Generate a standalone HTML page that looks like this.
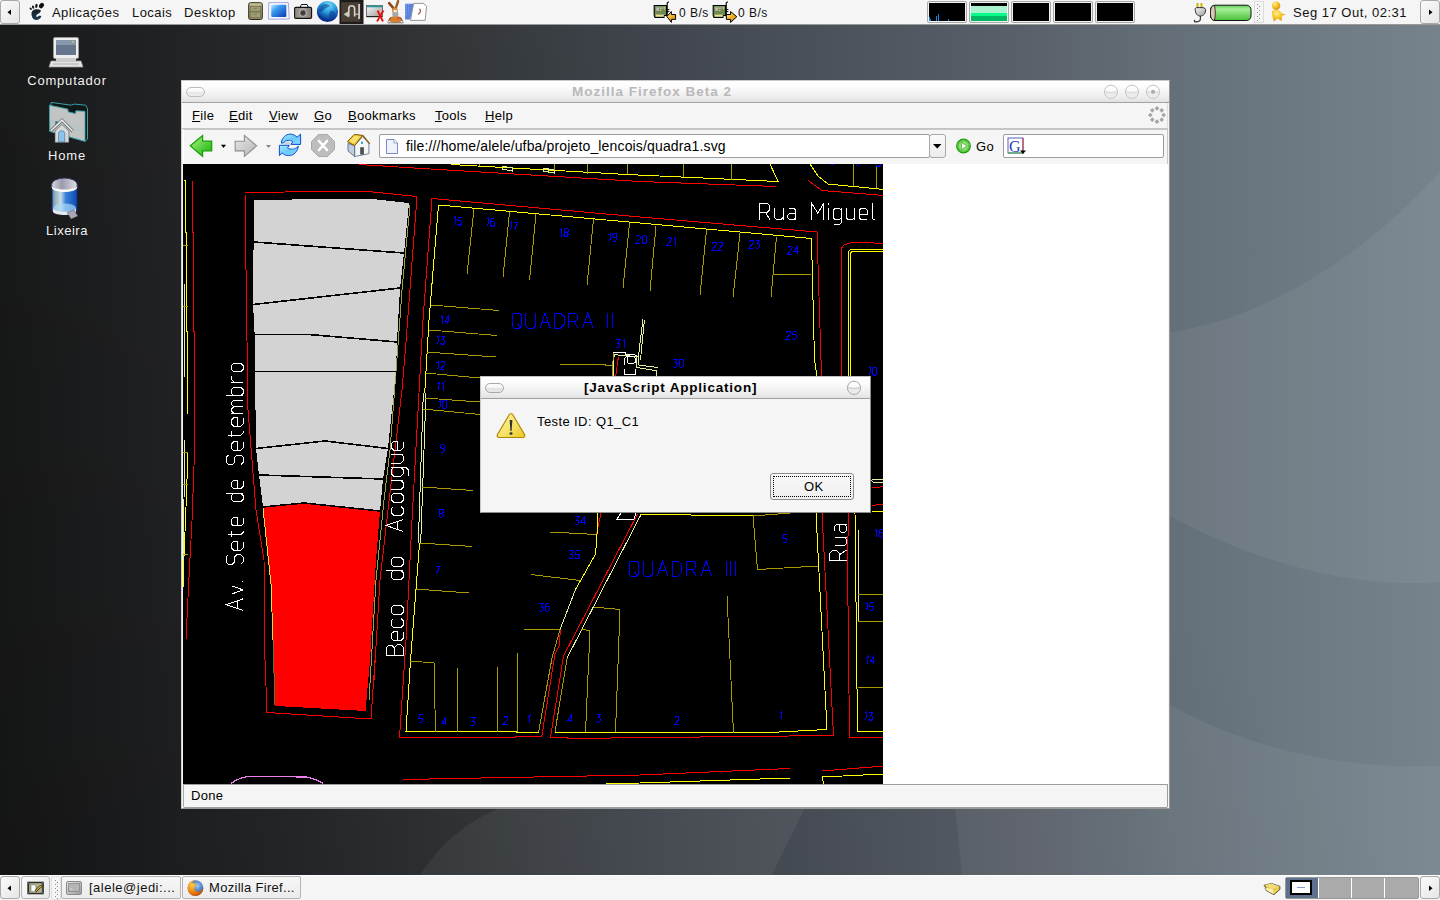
<!DOCTYPE html>
<html><head><meta charset="utf-8">
<style>
*{box-sizing:border-box}
html,body{margin:0;padding:0}
body{width:1440px;height:900px;position:relative;overflow:hidden;font-family:"Liberation Sans",sans-serif;font-size:13px;color:#000;background:#2a2d30}
.abs{position:absolute}
#desk{left:0;top:0;width:1440px;height:900px;background:linear-gradient(90deg,#1a1b1b 0px,#222325 150px,#2a2d30 300px,#363a3d 480px,#40454d 640px,#4a5058 800px,#5a6069 1020px,#66727b 1200px,#76838d 1440px)}
#top{left:0;top:0;width:1440px;height:25px;background:#f5f5f5;border-bottom:1px solid #9a9a9a}
#bot{left:0;top:875px;width:1440px;height:25px;background:#f5f5f5;border-top:1px solid #fff}
.ptxt{position:absolute;white-space:pre;color:#111}
.dicon{position:absolute;color:#f4f4f4;text-align:center;white-space:pre;text-shadow:0 0 1px rgba(0,0,0,0.6)}
#ff{left:181px;top:80px;width:989px;height:729px;background:#f5f5f5;border:1px solid #7a7a7a}
.menu{position:absolute;top:108px;white-space:pre;letter-spacing:0.3px}
.menu u{text-decoration:underline;text-underline-offset:0.5px;text-decoration-thickness:1px}
</style></head><body>
<div id="desk" class="abs">
<svg width="1440" height="900" style="position:absolute;left:0;top:0">
  <defs><linearGradient id="dkg" x1="0" y1="900" x2="900" y2="200" gradientUnits="userSpaceOnUse"><stop offset="0" stop-color="#000" stop-opacity="0.26"/><stop offset="0.45" stop-color="#000" stop-opacity="0.08"/><stop offset="1" stop-color="#000" stop-opacity="0"/></linearGradient></defs>
  <rect x="0" y="0" width="1440" height="900" fill="url(#dkg)"/>
  <path d="M420,875 C440,845 465,822 500,808 L700,700 L1000,420 C1080,380 1110,345 1170,332 C1260,320 1360,260 1440,172 L1440,582 C1350,590 1250,560 1170,516 L1000,560 L820,790 L805,808 L772,875 Z" fill="#ffffff" fill-opacity="0.055"/>
  <path d="M962,875 L955,808 L1000,780 L1170,705 C1250,750 1350,770 1440,766 L1440,875 Z" fill="#ffffff" fill-opacity="0.055"/>
</svg>
</div>

<!-- TOP PANEL -->
<div id="top" class="abs">
  <div class="abs" style="left:0;top:0;width:20px;height:24px;border:1px solid #a8a8a8;border-radius:3px;background:linear-gradient(135deg,#fafafa,#e6e6e6)"></div>
  <svg class="abs" style="left:0;top:0" width="20" height="24"><path d="M11,9.5 L11,15 L7.5,12.2 Z" fill="#000"/></svg>
  <svg class="abs" style="left:26px;top:0px" width="24" height="24">
    <defs><linearGradient id="ftg" x1="0" y1="0" x2="0" y2="1"><stop offset="0" stop-color="#1a1e22"/><stop offset="1" stop-color="#1a3a50"/></linearGradient></defs>
    <ellipse cx="15.5" cy="5.6" rx="2.2" ry="2.9" fill="#111" transform="rotate(35 15.5 5.6)"/>
    <ellipse cx="10.4" cy="5.9" rx="1.2" ry="2.1" fill="#111" transform="rotate(10 10.4 5.9)"/>
    <ellipse cx="7.1" cy="7.1" rx="1" ry="1.7" fill="#111" transform="rotate(-20 7.1 7.1)"/>
    <ellipse cx="4.7" cy="8.7" rx="0.9" ry="1.4" fill="#111" transform="rotate(-40 4.7 8.7)"/>
    <path d="M5.5,13.5 C5.5,10.8 8,9.3 11,9.3 C13.5,9.3 15,10 14.8,11.2 C14.5,12.8 12,13.5 10.5,15 C10,15.8 10.2,17 11,17 C11.8,17 12.3,16 13,15.8 C14.3,15.5 15.5,15.8 15.3,16.5 C14.8,18.5 12.5,19.9 10,19.9 C7,19.9 5.5,16.8 5.5,13.5 Z" fill="url(#ftg)"/>
  </svg>
  <div class="ptxt" style="left:52px;top:5px;letter-spacing:0.45px">Aplicações</div>
  <div class="ptxt" style="left:132px;top:5px;letter-spacing:0.45px">Locais</div>
  <div class="ptxt" style="left:184px;top:5px;letter-spacing:0.6px">Desktop</div>
  <!-- launchers -->
  <svg class="abs" style="left:246px;top:0" width="184" height="24">
    <!-- filing cabinet -->
    <defs>
      <linearGradient id="fcg" x1="0" y1="0" x2="0" y2="1"><stop offset="0" stop-color="#d8d6a8"/><stop offset="0.2" stop-color="#a8a67a"/><stop offset="1" stop-color="#8a8860"/></linearGradient>
      <linearGradient id="scg" x1="0" y1="0" x2="1" y2="1"><stop offset="0" stop-color="#b8f0ff"/><stop offset="0.35" stop-color="#3a9af0"/><stop offset="1" stop-color="#0a3ab0"/></linearGradient>
    </defs>
    <rect x="2.7" y="2.7" width="13.6" height="16.8" rx="1.8" fill="url(#fcg)" stroke="#2a2a1a" stroke-width="1"/>
    <rect x="4.2" y="6.4" width="10.5" height="4.8" fill="#a09e72" stroke="#6a6848" stroke-width="0.6"/>
    <rect x="4.2" y="12.1" width="10.5" height="5.5" fill="#a09e72" stroke="#6a6848" stroke-width="0.6"/>
    <path d="M7.5,8.8 L11,8.2 M7.5,14.8 L11,14.2" stroke="#7a7850" stroke-width="0.8"/>
    <!-- screen -->
    <path d="M22.8,2.6 L42.3,2.6 L43.3,19 L22.4,19.2 Z" fill="#f4f4ff" stroke="#a8a8d8" stroke-width="1"/>
    <rect x="25.2" y="4.8" width="15.1" height="12.1" rx="0.8" fill="url(#scg)"/>
    <!-- camera -->
    <defs><linearGradient id="cmg" x1="0" y1="0" x2="1" y2="0"><stop offset="0" stop-color="#8a8680"/><stop offset="0.5" stop-color="#a8a49c"/><stop offset="1" stop-color="#7a766e"/></linearGradient></defs>
    <path d="M54,7.5 L55.5,4.5 L61,4.5 L62.5,7.5 Z" fill="#fafafa" stroke="#111" stroke-width="1"/>
    <rect x="48.6" y="7.4" width="17" height="11" rx="1.2" fill="url(#cmg)" stroke="#111" stroke-width="1.1"/>
    <circle cx="57" cy="13" r="3.4" fill="#4a4844" stroke="#c8c8c8" stroke-width="0.9"/>
    <path d="M55.5,14 L58.5,11.5" stroke="#222" stroke-width="0.8"/>
    <!-- globe -->
    <defs><radialGradient id="glb" cx="0.55" cy="0.2" r="0.95"><stop offset="0" stop-color="#78dcf8"/><stop offset="0.35" stop-color="#2aa0e0"/><stop offset="0.7" stop-color="#0a3a9a"/><stop offset="1" stop-color="#020848"/></radialGradient></defs>
    <circle cx="81.5" cy="11.5" r="10.6" fill="url(#glb)"/>
    <path d="M76,5 C79,3 83,4 84,6 C82,8 80,7 79,9 C77,10 76,12 73.5,12 C73,9 74,7 76,5 Z M84,11 C87,10 90,12 89,15 C87,18 84,19 83,17 C82,15 84,13 84,11 Z M72,15 C74,15 77,17 76,20 C74,19 72,17 72,15 Z" fill="#0a3a8a" opacity="0.55"/>
    <!-- dark square -->
    <rect x="93.5" y="0" width="24" height="24" fill="#1e1c1a"/>
    <rect x="95" y="2" width="19.5" height="20" fill="#3c362e"/>
    <rect x="96" y="3" width="17" height="18" fill="#4a4238" opacity="0.8"/>
    <path d="M102.8,16.5 L102.8,8.5 C102.8,6.5 104,5.8 105.6,5.8 C107.2,5.8 108.6,6.5 108.6,8.5 L108.6,16.5" fill="none" stroke="#d8d4cc" stroke-width="1.6"/>
    <path d="M97.5,14.2 L102.8,11 L102.8,17.4 Z" fill="#d0ccc4"/>
    <rect x="112.2" y="4" width="1.8" height="15" fill="#d0ccc4"/>
    <path d="M108.6,14.2 L112.2,14.2" stroke="#d0ccc4" stroke-width="1.2"/>
    <!-- window with red x -->
    <defs><linearGradient id="wgr" x1="0" y1="0" x2="1" y2="1"><stop offset="0" stop-color="#fafafa"/><stop offset="1" stop-color="#9a9a9a"/></linearGradient></defs>
    <rect x="120.5" y="5.5" width="16" height="11" fill="url(#wgr)" stroke="#555" stroke-width="0.8"/>
    <rect x="121" y="5.5" width="15" height="1.8" fill="#2a9a9a"/>
    <rect x="120.5" y="16" width="16" height="1.2" fill="#222"/>
    <path d="M131.5,10.5 L137,21.5 M137.5,10.5 L131,21.5" stroke="#ee1010" stroke-width="1.8"/>
    <!-- bunny -->
    <path d="M143.1,3.2 L147.8,8.6" stroke="#8a4a18" stroke-width="2.6" stroke-linecap="round"/>
    <path d="M152.1,1.2 L149.6,8.6" stroke="#9a5a20" stroke-width="2.4" stroke-linecap="round"/>
    <ellipse cx="149.5" cy="19.5" rx="6.8" ry="3.4" fill="#d88030"/>
    <path d="M142,21.5 L145,17.5 M157,21.5 L154,17.5" stroke="#555" stroke-width="1"/>
    <circle cx="148.9" cy="10.4" r="2.9" fill="#d8883a"/>
    <rect x="146.3" y="11.8" width="6.2" height="5" rx="2" fill="#a8a8a8"/>
    <ellipse cx="149.2" cy="11" rx="1.8" ry="1.2" fill="#f0f0f0"/>
    <circle cx="152.3" cy="17.9" r="1" fill="#e03050"/>
    <rect x="141.5" y="22" width="16" height="1.5" fill="#777" opacity="0.7"/>
    <!-- documents -->
    <path d="M159.1,3.8 L167.7,3.8 L164.2,19.5 L159.1,19.5 Z" fill="#5a80e0"/>
    <path d="M160,5 L164,5 M160,8 L163.5,8 M160,11 L163,11 M160,14 L162.5,14" stroke="#9ab8f8" stroke-width="0.8" stroke-dasharray="1 1"/>
    <path d="M167.7,3.4 L177.6,3.4 L180.5,6.4 L179.2,20.4 L164.5,20.4 Z" fill="#ffffff" stroke="#8a8a8a" stroke-width="0.9"/>
    <path d="M173.5,8.8 C175,10.5 174.8,13 172,14.5" stroke="#a86060" stroke-width="1.4" fill="none"/>
  </svg>
  <!-- netspeed -->
  <svg class="abs" style="left:652px;top:0px" width="85" height="24">
    <defs>
      <linearGradient id="gold" x1="0" y1="0" x2="1" y2="1"><stop offset="0" stop-color="#fff0a0"/><stop offset="0.5" stop-color="#f0b020"/><stop offset="1" stop-color="#c08000"/></linearGradient>
      <g id="nic">
        <path d="M2.2,5.5 L14.6,5.5 L14.6,15.5 L12,15.5 L12,17.5 L3,17.5 L2.2,15.5 Z" fill="#6e8a52" stroke="#000" stroke-width="1.1"/>
        <rect x="3.5" y="6.5" width="10" height="2" fill="#9cb080" opacity="0.6"/>
        <rect x="4.2" y="7.6" width="3" height="3.2" fill="#bbb"/>
        <rect x="8" y="8" width="1.4" height="1" fill="#e8d060"/><rect x="8" y="10" width="1.4" height="1" fill="#e8d060"/>
        <rect x="10.2" y="7" width="1" height="2.4" fill="#a0a0e0"/><rect x="12" y="7" width="1" height="2.4" fill="#e0c040"/>
        <rect x="3.8" y="14.6" width="8" height="2" fill="#e8e090"/>
        <path d="M15.2,16.5 L15.2,3 L16.8,1.6" stroke="#000" stroke-width="1.1" fill="none"/>
        <path d="M15.2,9.6 L17.4,9.6 M15.2,11.6 L17.4,11.6" stroke="#000" stroke-width="1"/>
      </g>
    </defs>
    <use href="#nic"/>
    <path d="M14.9,16.5 L19.4,11.6 L19.4,14.5 L23.6,14.5 L23.6,19.4 L19.4,19.4 L19.4,22.4 Z" fill="url(#gold)" stroke="#000" stroke-width="1"/>
    <g transform="translate(59,0)">
      <use href="#nic"/>
      <path d="M25.8,16.7 L19.6,11.6 L19.6,14.5 L15.4,14.5 L15.4,19.4 L19.6,19.4 L19.6,22.4 Z" fill="url(#gold)" stroke="#000" stroke-width="1"/>
    </g>
  </svg>
  <div class="ptxt" style="left:679px;top:6px;font-size:12px;letter-spacing:0.5px">0 B/s</div>
  <div class="ptxt" style="left:738px;top:6px;font-size:12px;letter-spacing:0.5px">0 B/s</div>
  <!-- system monitors -->
  <div class="abs" style="left:927px;top:1px;width:40px;height:22px;border:1px solid #a8a8a8;border-radius:2px;background:#f2f2f2;padding:1px">
    <div style="width:36px;height:18px;background:#000;position:relative">
      <div class="abs" style="left:0px;top:14px;width:1px;height:4px;background:#1a8ae0"></div>
      <div class="abs" style="left:1px;top:16px;width:1px;height:2px;background:#1a8ae0"></div>
      <div class="abs" style="left:7px;top:13px;width:1px;height:5px;background:#1a8ae0"></div>
      <div class="abs" style="left:9px;top:11px;width:1px;height:7px;background:#1a8ae0"></div>
      <div class="abs" style="left:19px;top:16px;width:1px;height:2px;background:#1a8ae0"></div>
    </div>
  </div>
  <div class="abs" style="left:969px;top:1px;width:40px;height:22px;border:1px solid #a8a8a8;border-radius:2px;background:#f2f2f2;padding:1px">
    <div style="width:36px;height:18px;background:linear-gradient(#000 0,#000 3px,#aaf2cf 3px,#aaf2cf 10px,#00ff88 10px,#00ff88 13px,#00b862 13px)"></div>
  </div>
  <div class="abs" style="left:1011px;top:1px;width:40px;height:22px;border:1px solid #a8a8a8;border-radius:2px;background:#f2f2f2;padding:1px"><div style="width:36px;height:18px;background:#000"></div></div>
  <div class="abs" style="left:1053px;top:1px;width:40px;height:22px;border:1px solid #a8a8a8;border-radius:2px;background:#f2f2f2;padding:1px"><div style="width:36px;height:18px;background:#000"></div></div>
  <div class="abs" style="left:1095px;top:1px;width:40px;height:22px;border:1px solid #a8a8a8;border-radius:2px;background:#f2f2f2;padding:1px"><div style="width:36px;height:18px;background:#000"></div></div>
  <!-- plug + battery -->
  <svg class="abs" style="left:1190px;top:0px" width="100" height="24">
    <defs>
      <linearGradient id="plg" x1="0" y1="0" x2="1" y2="1"><stop offset="0" stop-color="#f4f4f4"/><stop offset="1" stop-color="#a0a0a0"/></linearGradient>
      <linearGradient id="btg" x1="0" y1="0" x2="0" y2="1"><stop offset="0" stop-color="#5cc850"/><stop offset="0.25" stop-color="#a8f098"/><stop offset="1" stop-color="#48c038"/></linearGradient>
      <radialGradient id="usg" cx="0.35" cy="0.3" r="0.8"><stop offset="0" stop-color="#fff090"/><stop offset="0.5" stop-color="#f8c020"/><stop offset="1" stop-color="#d88000"/></radialGradient>
    </defs>
    <path d="M7.5,3 L7.5,8.5 M11.5,3 L11.5,8.5" stroke="#c8b800" stroke-width="2"/>
    <path d="M5.2,9 C5.2,8 6,7.6 7,7.6 L12,7.6 C13,7.6 15.6,8 15.6,9.5 C15.6,13.5 13.5,16 10.4,16 C7.3,16 5.2,13.5 5.2,9 Z" fill="url(#plg)" stroke="#222" stroke-width="0.9"/>
    <path d="M10.4,16 L10.4,19 C10.4,21.5 8,21.8 5.5,21.8 C4,21.8 4.2,20.5 5,20" fill="none" stroke="#333" stroke-width="1.2"/>
    <rect x="20.5" y="5.2" width="40.5" height="15.3" rx="4.5" fill="url(#btg)" stroke="#111" stroke-width="1"/>
    <path d="M24.5,5.5 C22,5.5 20.5,7.5 20.5,12.8 C20.5,18 22,20.3 24.5,20.3 C25.5,17 25.5,9 24.5,5.5 Z" fill="#e0c8b8" stroke="#111" stroke-width="0.8"/>
    <circle cx="86.1" cy="5.8" r="4.2" fill="url(#usg)"/>
    <path d="M82,11 C83.5,10 88.5,10 90,11 L92,13.5 L95.5,14.5 L92,16 L91.5,21 L87.5,18.5 L84,21.5 L82.5,17 C82,15 81.8,13 82,11 Z" fill="url(#usg)"/>
  </svg>
  <div class="abs" style="left:1254px;top:1px;width:10px;height:22px;border:1px solid #dcdcdc;background:#f5f5f5"></div><svg class="abs" style="left:1254px;top:1px" width="10" height="22"><g fill="#8a8a8a"><rect x="3" y="3" width="1" height="1"/><rect x="5" y="5" width="1" height="1"/><rect x="3" y="7" width="1" height="1"/><rect x="5" y="9" width="1" height="1"/><rect x="3" y="11" width="1" height="1"/><rect x="5" y="13" width="1" height="1"/><rect x="3" y="15" width="1" height="1"/><rect x="5" y="17" width="1" height="1"/><rect x="3" y="19" width="1" height="1"/></g></svg>
  <div class="ptxt" style="left:1293px;top:5px;letter-spacing:0.5px">Seg 17 Out, 02:31</div>
  <div class="abs" style="left:1420px;top:0;width:20px;height:24px;border:1px solid #a8a8a8;border-radius:3px;background:linear-gradient(135deg,#fafafa,#e6e6e6)"></div>
  <svg class="abs" style="left:1420px;top:0" width="20" height="24"><path d="M9,9.5 L9,15 L12.5,12.2 Z" fill="#000"/></svg>
</div>

<!-- BOTTOM PANEL -->
<div id="bot" class="abs">
  <div class="abs" style="left:0;top:0px;width:20px;height:23px;border:1px solid #a8a8a8;border-radius:3px;background:linear-gradient(135deg,#fafafa,#e6e6e6)"></div>
  <svg class="abs" style="left:0;top:0" width="20" height="24"><path d="M11,9.5 L11,15 L7.5,12.2 Z" fill="#000"/></svg>
  <div class="abs" style="left:21px;top:0px;width:29px;height:23px;border:1px solid #b4b4b4;border-radius:3px;background:linear-gradient(135deg,#fafafa,#e8e8e8)"></div>
  <svg class="abs" style="left:25px;top:3px" width="22" height="18">
    <rect x="2.4" y="2.7" width="16.4" height="12.6" rx="1" fill="#1a1a14"/>
    <rect x="4" y="4" width="13.2" height="10" rx="1.5" fill="#b0b090" stroke="#6a6a50" stroke-width="0.5"/>
    <rect x="2.4" y="2.7" width="2.2" height="2.2" fill="#50607a"/><rect x="16.6" y="2.7" width="2.2" height="2.2" fill="#50607a"/>
    <rect x="2.4" y="13.1" width="2.2" height="2.2" fill="#50607a"/><rect x="16.6" y="13.1" width="2.2" height="2.2" fill="#50607a"/>
    <path d="M6,5.8 L9.5,5.8 L11,7.3 L11,12.7 L6,12.7 Z" fill="#fafafa" stroke="#555" stroke-width="0.5"/>
    <path d="M10.5,12.2 L16.5,6.5" stroke="#111" stroke-width="2.4"/>
    <path d="M10.8,11.9 L16.2,6.8" stroke="#f0c020" stroke-width="1.2"/>
  </svg>
  <div class="abs" style="left:51px;top:0px;width:10px;height:24px;border:1px solid #e0e0e0;border-radius:2px"></div><svg class="abs" style="left:53px;top:0px" width="7" height="24"><g fill="#8a8a8a"><rect x="2" y="4" width="1" height="1"/><rect x="4" y="6" width="1" height="1"/><rect x="2" y="8" width="1" height="1"/><rect x="4" y="10" width="1" height="1"/><rect x="2" y="12" width="1" height="1"/><rect x="4" y="14" width="1" height="1"/><rect x="2" y="16" width="1" height="1"/><rect x="4" y="18" width="1" height="1"/><rect x="2" y="20" width="1" height="1"/><rect x="4" y="22" width="1" height="1"/></g></svg>
  <div class="abs" style="left:61px;top:0px;width:120px;height:23px;border:1px solid #b4b4b4;border-radius:2px;background:linear-gradient(#f6f6f6,#ececec)"></div>
  <svg class="abs" style="left:66px;top:5px" width="17" height="15">
    <defs><linearGradient id="tmg" x1="0" y1="0" x2="1" y2="1"><stop offset="0" stop-color="#e8e8e8"/><stop offset="1" stop-color="#9a9a9a"/></linearGradient></defs>
    <rect x="0.5" y="0.5" width="15" height="13" rx="1.5" fill="url(#tmg)" stroke="#8a8a8a"/>
    <rect x="2.5" y="2.5" width="11" height="8" fill="#b4b4b4" stroke="#7a7a7a" stroke-width="0.6"/>
    <path d="M4,8 L6.5,8" stroke="#eee" stroke-width="0.8"/>
  </svg>
  <div class="ptxt" style="left:89px;top:4px;letter-spacing:0.5px">[alele@jedi:...</div>
  <div class="abs" style="left:182px;top:0px;width:119px;height:23px;border:1px solid #b4b4b4;border-radius:2px;background:linear-gradient(#f6f6f6,#ececec)"></div>
  <svg class="abs" style="left:186px;top:3px" width="18" height="18">
    <defs><radialGradient id="fxb" cx="0.6" cy="0.35" r="0.6"><stop offset="0" stop-color="#9ac8f0"/><stop offset="1" stop-color="#1a4a9a"/></radialGradient>
    <radialGradient id="fxo" cx="0.3" cy="0.3" r="0.8"><stop offset="0" stop-color="#ffd040"/><stop offset="0.5" stop-color="#f08a10"/><stop offset="1" stop-color="#c04a08"/></radialGradient></defs>
    <circle cx="9.5" cy="9" r="7.8" fill="url(#fxb)"/>
    <path d="M2,7.5 C2.5,3.5 5.5,1.2 9,1.2 C7,2 6,3.5 6.5,4.5 C8,3.8 10,4.5 10.5,6 C9,6.5 8,8 8.5,10 C9,12.5 12,13.5 14.5,12 C16,11 17,9.5 17.3,8.5 C17.5,13 14,17 9.5,17 C5,17 1.7,13.5 1.7,9.5 C1.7,8.8 1.8,8.2 2,7.5 Z" fill="url(#fxo)"/>
  </svg>
  <div class="ptxt" style="left:209px;top:4px;letter-spacing:0.3px">Mozilla Firef...</div>
  <svg class="abs" style="left:1262px;top:5px" width="20" height="16">
    <path d="M2.4,4.1 L9.6,2.5 L17.9,5.4 L17.9,8.3 L12,13.7 L4,9.4 L4,7 Z" fill="#e8cc50" stroke="#3a3010" stroke-width="0.8"/>
    <path d="M2.4,4.1 L9.6,2.5 L17.6,5.4 L10.4,7.8 Z" fill="#f0dc78"/>
    <path d="M4,7 L10.4,7.8 L12,13.2 L4.3,9.2 Z" fill="#f8eeb0"/>
    <path d="M1.8,4.5 L3,6.5 M2.5,7.5 L3.5,8.5" stroke="#888" stroke-width="0.8"/>
  </svg>
  <div class="abs" style="left:1285px;top:1px;width:134px;height:22px;background:#aaaaaa;border:1px solid #999;border-radius:2px"></div>
  <div class="abs" style="left:1286px;top:2px;width:32px;height:20px;background:#5f6f8e"></div>
  <div class="abs" style="left:1290px;top:4px;width:22px;height:15px;background:#fff;border:2px solid #000"></div>
  <div class="abs" style="left:1297px;top:11px;width:8px;height:1px;background:#8a9ac8"></div>
  <div class="abs" style="left:1318px;top:2px;width:1px;height:20px;background:#fff"></div>
  <div class="abs" style="left:1351px;top:2px;width:1px;height:20px;background:#fff"></div>
  <div class="abs" style="left:1384px;top:2px;width:1px;height:20px;background:#fff"></div>
  <div class="abs" style="left:1420px;top:0px;width:20px;height:23px;border:1px solid #a8a8a8;border-radius:3px;background:linear-gradient(135deg,#fafafa,#e6e6e6)"></div>
  <svg class="abs" style="left:1420px;top:0" width="20" height="24"><path d="M9,9.5 L9,15 L12.5,12.2 Z" fill="#000"/></svg>
</div>

<!-- DESKTOP ICONS -->
<svg class="abs" style="left:48px;top:36px" width="36" height="34">
  <rect x="5.5" y="1.5" width="25" height="21" rx="1.5" fill="#eee" stroke="#999"/>
  <rect x="8" y="4" width="20" height="15" fill="#65768c"/>
  <rect x="8" y="4" width="20" height="5" fill="#8898ac"/>
  <rect x="24" y="5" width="2" height="1.5" fill="#d8c060"/>
  <path d="M3,25 L33,25 L35,31 L1,31 Z" fill="#e6e6e6" stroke="#999" stroke-width="0.8"/>
  <rect x="8" y="22" width="20" height="3" fill="#ccc"/>
  <path d="M5,28 L31,28" stroke="#aaa" stroke-width="1"/>
</svg>
<div class="dicon" style="left:26px;top:73px;width:82px;letter-spacing:0.8px">Computador</div>
<svg class="abs" style="left:40px;top:98px" width="55" height="50">
  <path d="M11.1,4.4 L31.1,7.2 L34.4,6.1 L45.6,7.2 L47.5,10.6 L47.5,41.1 L45,43.3 L10,33.3 Z" fill="#101818" stroke="#3aa0a8" stroke-width="1"/>
  <path d="M9.4,7.2 L27.8,11.1 L28.3,13.9 L35.6,15.6 L35.8,12.8 L45,13.3 L45,43.3 L9.7,33.3 Z" fill="#c2c4c4" stroke="#3aa0a8" stroke-width="0.9"/>
  <path d="M9.6,22 L45,31 M9.6,25 L45,34" stroke="#8ec8cc" stroke-width="0.6" opacity="0.8"/>
  <rect x="15.3" y="23.3" width="2.7" height="4.5" fill="#2a7a80"/>
  <path d="M15,33 L15,44.4 L28.9,44.4 L28.9,33 L22,26.5 Z" fill="#d8d8d8" stroke="#555" stroke-width="0.6"/>
  <path d="M11.1,32.8 L22,22.2 L32.8,33.3" fill="none" stroke="#6a6a6a" stroke-width="3.2"/>
  <path d="M11.1,32.8 L22,22.2 L32.8,33.3" fill="none" stroke="#e8e8e8" stroke-width="1.6"/>
  <path d="M18.6,44 L18.6,35.5 C18.6,33.5 19.8,32.8 21.6,32.8 C23.4,32.8 24.7,33.5 24.7,35.5 L24.7,44 Z" fill="#8cc4f0" stroke="#3a6a90" stroke-width="0.6"/>
</svg>
<div class="dicon" style="left:26px;top:148px;width:82px;letter-spacing:0.8px">Home</div>
<svg class="abs" style="left:40px;top:172px" width="55" height="50">
  <defs>
    <linearGradient id="tbody" x1="0" y1="0" x2="1" y2="0"><stop offset="0" stop-color="#2a60c0"/><stop offset="0.08" stop-color="#8aa8b0"/><stop offset="0.35" stop-color="#c8dce8"/><stop offset="0.55" stop-color="#3a80d8"/><stop offset="1" stop-color="#0a4ab8"/></linearGradient>
    <linearGradient id="tlid" x1="0" y1="0" x2="1" y2="0"><stop offset="0" stop-color="#d8d8e0"/><stop offset="0.4" stop-color="#9a9aaa"/><stop offset="1" stop-color="#e0e0e8"/></linearGradient>
  </defs>
  <path d="M12,16 L12,38 C12,43 37,43 37,38 L37,16 Z" fill="url(#tbody)" stroke="#1a2a70" stroke-width="0.8"/>
  <ellipse cx="24.5" cy="36" rx="11.5" ry="4.5" fill="#a8d8f8" opacity="0.7"/>
  <path d="M13,36 C14,41 35,41 36,36 L36,40 C34,44 15,44 13,40 Z" fill="#e8e8f0"/>
  <ellipse cx="24.4" cy="12.6" rx="12.8" ry="6.5" fill="url(#tlid)" stroke="#2a2a60" stroke-width="0.8"/>
  <path d="M11.7,13 C12,19 37,19 37.2,13 L37.2,15.5 C36,21.5 13,21.5 11.7,15.5 Z" fill="#fafafa"/>
  <path d="M27.2,40.5 L34,38 L37.8,44 L31,47 Z" fill="#a8a8b8" stroke="#555" stroke-width="0.5"/>
</svg>
<div class="dicon" style="left:26px;top:223px;width:82px;letter-spacing:0.5px">Lixeira</div>

<!-- FIREFOX WINDOW -->
<div class="abs" style="left:181px;top:80px;width:989px;height:729px;background:#f5f5f5;border:1px solid #9a9a9a;border-top-color:#c8c8c8;border-left-color:#d0d0d0"></div>
<div class="abs" style="left:182px;top:81px;width:987px;height:21px;background:linear-gradient(#ffffff 0,#fbfbfb 30%,#ececec 80%,#e0e0e0 100%)"></div>
<div class="abs" style="left:182px;top:102px;width:987px;height:1px;background:#a4a4a4"></div>
<div class="abs" style="left:186px;top:87px;width:19px;height:10px;border:1px solid #bdbdbd;border-radius:5px;background:linear-gradient(#fdfdfd 0,#f6f6f6 50%,#e6e6e6 51%,#ececec 100%)"></div>
<div class="abs" style="left:572px;top:84px;white-space:pre;font-weight:bold;font-size:13.5px;color:#b9b9b9;letter-spacing:1px">Mozilla Firefox Beta 2</div>
<svg class="abs" style="left:1100px;top:82px" width="64" height="20">
  <defs><linearGradient id="bg1" x1="0" y1="0" x2="0" y2="1"><stop offset="0" stop-color="#fff"/><stop offset="0.5" stop-color="#f8f8f8"/><stop offset="0.51" stop-color="#e8e8e8"/><stop offset="1" stop-color="#efefef"/></linearGradient></defs>
  <circle cx="11" cy="9.8" r="6.6" fill="url(#bg1)" stroke="#c4c4c4" stroke-width="1"/>
  <path d="M4.8,8.5 C6,11 16,11 17.2,8.5" fill="none" stroke="#d0d0d0" stroke-width="0.8"/>
  <circle cx="32" cy="9.8" r="6.6" fill="url(#bg1)" stroke="#c4c4c4" stroke-width="1"/>
  <path d="M25.8,8.5 C27,11 37,11 38.2,8.5" fill="none" stroke="#d0d0d0" stroke-width="0.8"/>
  <circle cx="53" cy="9.8" r="6.6" fill="url(#bg1)" stroke="#c4c4c4" stroke-width="1"/>
  <path d="M46.8,8.5 C48,11 58,11 59.2,8.5" fill="none" stroke="#d0d0d0" stroke-width="0.8"/>
  <circle cx="53" cy="9.8" r="2" fill="#aaa"/>
</svg>
<!-- menubar -->
<div class="abs" style="left:182px;top:103px;width:986px;height:25px;border-left:1px solid #fff;border-right:1px solid #ddd"></div>
<div class="abs" style="left:182px;top:128px;width:986px;height:1px;background:#c4c4c4"></div>
<div class="menu" style="left:192px"><u>F</u>ile</div>
<div class="menu" style="left:229px"><u>E</u>dit</div>
<div class="menu" style="left:269px"><u>V</u>iew</div>
<div class="menu" style="left:314px"><u>G</u>o</div>
<div class="menu" style="left:348px"><u>B</u>ookmarks</div>
<div class="menu" style="left:435px"><u>T</u>ools</div>
<div class="menu" style="left:485px"><u>H</u>elp</div>
<svg class="abs" style="left:1148px;top:106px" width="18" height="18">
  <g fill="#a4a4a4"><rect x="7.3" y="0.6" width="3.4" height="3.4" rx="0.8" transform="rotate(45 9 2.3)"/><rect x="12" y="2.6" width="3.4" height="3.4" rx="0.8" transform="rotate(45 13.7 4.3)"/><rect x="14" y="7.3" width="3.4" height="3.4" rx="0.8" transform="rotate(45 15.7 9)"/><rect x="12" y="12" width="3.4" height="3.4" rx="0.8" transform="rotate(45 13.7 13.7)"/><rect x="7.3" y="14" width="3.4" height="3.4" rx="0.8" transform="rotate(45 9 15.7)"/><rect x="2.6" y="12" width="3.4" height="3.4" rx="0.8" transform="rotate(45 4.3 13.7)"/><rect x="0.6" y="7.3" width="3.4" height="3.4" rx="0.8" transform="rotate(45 2.3 9)"/><rect x="2.6" y="2.6" width="3.4" height="3.4" rx="0.8" transform="rotate(45 4.3 4.3)"/></g>
</svg>
<!-- nav toolbar -->
<div class="abs" style="left:183px;top:129px;width:985px;height:35px;border:1px solid #c8c8c8;border-bottom:none;border-left-color:#fff;background:#f5f5f5"></div>
<svg class="abs" style="left:186px;top:131px" width="200" height="30">
  <defs>
    <linearGradient id="gA" x1="0" y1="0" x2="1" y2="1"><stop offset="0" stop-color="#b8f59a"/><stop offset="0.6" stop-color="#4ecb35"/><stop offset="1" stop-color="#2aa51a"/></linearGradient>
    <linearGradient id="gF" x1="0" y1="0" x2="1" y2="1"><stop offset="0" stop-color="#e8e8e8"/><stop offset="1" stop-color="#b4b4b4"/></linearGradient>
    <linearGradient id="gR" x1="0" y1="0" x2="1" y2="1"><stop offset="0" stop-color="#a8ecff"/><stop offset="0.5" stop-color="#6cc8fa"/><stop offset="1" stop-color="#8ad8ff"/></linearGradient>
  </defs>
  <path d="M4.3,14.8 L16.6,4.6 L16.6,10.2 L25.7,10.2 L25.7,19.8 L16.6,19.8 L16.6,25.4 Z" fill="url(#gA)" stroke="#13a000" stroke-width="1.2" stroke-linejoin="miter"/>
  <path d="M35,13.8 L40,13.8 L37.5,16.9 Z" fill="#000"/>
  <path d="M70.7,14.8 L58.4,4.4 L58.4,10.3 L49.2,10.3 L49.2,19.9 L58.4,19.9 L58.4,25.4 Z" fill="url(#gF)" stroke="#8e8e8e" stroke-width="1.1" stroke-linejoin="miter"/>
  <path d="M80,14 L85,14 L82.5,17 Z" fill="#888"/>
  <!-- reload -->
  <path d="M95.3,12.1 C96,6.5 100,3.1 104.3,3.1 C107,3.1 109.5,4.5 111.2,6.2 L114.6,3.1 L114.6,13.4 L104.9,13.4 L106.8,10.8 C105.5,9.8 104,9.3 102.4,9.3 C100,9.3 98.5,10.6 97.2,12.1 Z" fill="url(#gR)" stroke="#0a50d0" stroke-width="1"/>
  <path d="M93.4,14.3 L103.4,14.3 L101.5,16.8 C103,17.8 104.5,18.2 106.2,18.2 C108.5,18.2 110.5,16.8 112.4,15.2 C111.5,20 108.5,24.6 102.4,24.6 C99.5,24.6 97.5,23.3 96.2,22 L93.4,24.6 Z" fill="url(#gR)" stroke="#0a50d0" stroke-width="1"/>
  <path d="M97.6,12.6 C99,11 101,10.2 103,10.4 L105.5,13.6 L98.5,13.8 Z" fill="#b8c8d0" opacity="0.7"/>
  <path d="M103.5,16.6 L106,17.6 C108,17.6 110,16.8 111.5,15.6 C110.5,17 108.5,18.6 105,18.6 Z" fill="#b8c8d0" opacity="0.6"/>
  <!-- stop -->
  <path d="M132.5,3.5 L141.5,3.5 L148.5,10.5 L148.5,18.5 L141.5,25.5 L132.5,25.5 L125.5,18.5 L125.5,10.5 Z" fill="#bdbdbd" stroke="#a8a8a8" stroke-width="1"/>
  <path d="M133,10 L141,19 M141,10 L133,19" stroke="#fff" stroke-width="2.6" stroke-linecap="round"/>
  <!-- home -->
  <path d="M168.6,25.5 L168.6,14.6 L176.7,5.6 L182.9,12.4 L182.9,22.7 Z" fill="#f6f6f4" stroke="#6a7a96" stroke-width="0.9"/>
  <path d="M162,12.4 L168.6,14.6 L168.6,25.5 L162,19.9 Z" fill="#bcd0e4" stroke="#5a6a86" stroke-width="0.9"/>
  <path d="M161.4,10.6 L168.3,3.4 L176.7,4.4 L168.6,14.6 Z" fill="#f0cc30" stroke="#7a5200" stroke-width="1"/>
  <path d="M163.5,10.5 L168.6,5 L174,5.6 L168.3,12.5 Z" fill="#fae070"/>
  <path d="M176.7,4.4 L183.8,12.8" stroke="#7a5200" stroke-width="1.2"/>
  <rect x="174.2" y="16.2" width="3.7" height="7.4" fill="#4a505a"/>
  <rect x="175" y="10.7" width="2" height="2.2" fill="#3a9ae0"/>
</svg>
<!-- url box -->
<div class="abs" style="left:379px;top:134px;width:551px;height:24px;background:#fff;border:1px solid #9c9c9c;border-radius:2px"></div>
<svg class="abs" style="left:384px;top:138px" width="16" height="17">
  <path d="M2.5,1.5 L10,1.5 L13.5,5 L13.5,15.5 L2.5,15.5 Z" fill="#eef2fb" stroke="#7a8ac0" stroke-width="1"/>
  <path d="M10,1.5 L10,5 L13.5,5" fill="#fff" stroke="#7a8ac0" stroke-width="0.8"/>
</svg>
<div class="abs" style="left:406px;top:138px;white-space:pre;font-size:14px;letter-spacing:0.15px">file:///home/alele/ufba/projeto_lencois/quadra1.svg</div>
<div class="abs" style="left:929px;top:134px;width:17px;height:24px;background:linear-gradient(#fafafa,#ececec);border:1px solid #a8a8a8;border-radius:3px"></div>
<svg class="abs" style="left:929px;top:134px" width="17" height="24"><path d="M4,10 L12.5,10 L8.25,14.5 Z" fill="#000"/></svg>
<svg class="abs" style="left:955px;top:137px" width="18" height="18">
  <circle cx="8.5" cy="9" r="6.8" fill="#5ccc45" stroke="#239a14" stroke-width="1.2"/>
  <circle cx="8.5" cy="9" r="4.6" fill="#8fe070"/>
  <path d="M6.5,5.5 L12,9 L6.5,12.5 Z" fill="#fff" stroke="#2a9a1a" stroke-width="0.6"/>
</svg>
<div class="abs" style="left:976px;top:139px;white-space:pre;letter-spacing:0.5px">Go</div>
<div class="abs" style="left:1003px;top:134px;width:161px;height:24px;background:#fff;border:1px solid #9c9c9c;border-radius:2px"></div>
<svg class="abs" style="left:1007px;top:137px" width="22" height="18">
  <rect x="1" y="1" width="15" height="15" fill="#fff" stroke="#2a3aa8" stroke-width="0.8"/>
  <path d="M1,16 L16,16" stroke="#3aa83a" stroke-width="1"/><path d="M16,1 L16,16" stroke="#d02a2a" stroke-width="1"/>
  <text x="2" y="14.5" font-family="Liberation Serif" font-size="16" fill="#2040c0">G</text>
  <path d="M13,13.5 L19,13.5 L16,17 Z" fill="#000"/>
</svg>
<!-- content -->
<div class="abs" style="left:183px;top:164px;width:985px;height:620px;background:#fff"></div>
<div class="abs" id="map" style="left:183px;top:164px;width:700px;height:620px;background:#000;overflow:hidden"><svg width="700" height="620" viewBox="183 164 700 620" style="position:absolute;left:0;top:0;font-family:'Liberation Sans',sans-serif" shape-rendering="crispEdges"><polyline points="359,164.5 422,168.5 640,181.5 776,186.5" fill="none" stroke="#ff0000" stroke-width="1"/>
<polyline points="451,164.5 627,174.5 778,181.5 770,164" fill="none" stroke="#ffff00" stroke-width="1"/>
<polyline points="480,164 479.5,166" fill="none" stroke="#a89a00" stroke-width="1"/>
<polyline points="555,164 554.5,172" fill="none" stroke="#a89a00" stroke-width="1"/>
<polyline points="588,164 587.5,174" fill="none" stroke="#a89a00" stroke-width="1"/>
<polyline points="628,164 627.5,174" fill="none" stroke="#a89a00" stroke-width="1"/>
<polyline points="684,164 683.5,177" fill="none" stroke="#a89a00" stroke-width="1"/>
<polyline points="732,164 731.5,180" fill="none" stroke="#a89a00" stroke-width="1"/>
<polygon points="502,166 512,168 512,171 502,169" fill="none" stroke="#e0f0a0" stroke-width="1"/>
<polygon points="543,168 554,170 554,173 543,171" fill="none" stroke="#e0f0a0" stroke-width="1"/>
<polyline points="810,164 818,176 828,184 884,189.5" fill="none" stroke="#ffff00" stroke-width="1"/>
<polyline points="808,180.5 822,190.5 884,195.5" fill="none" stroke="#ff0000" stroke-width="1"/>
<polyline points="853,164 853,186" fill="none" stroke="#a89a00" stroke-width="1"/>
<polyline points="876,164 876,188" fill="none" stroke="#a89a00" stroke-width="1"/>
<polyline points="183.5,180.5 185.5,180.5 185.5,232.5 186.5,232.5 186.5,331 187.5,331 188,414 188,452 186,507 184,557 183.5,587" fill="none" stroke="#ffff00" stroke-width="1"/>
<polyline points="184.5,284 184.5,331 185,377" fill="none" stroke="#e0f0a0" stroke-width="1"/>
<polyline points="184.5,440 184,500 183.5,560" fill="none" stroke="#e0f0a0" stroke-width="1"/>
<polyline points="192.5,180.5 192.5,232.5 193.5,232.5 193.5,331 194.5,331 195,420 194,466 192,521 189,577 186,639" fill="none" stroke="#ff0000" stroke-width="1"/>
<polyline points="183,245 188,245" fill="none" stroke="#a89a00" stroke-width="1"/>
<polyline points="183,306 188,306" fill="none" stroke="#a89a00" stroke-width="1"/>
<polyline points="183,452 188,452" fill="none" stroke="#a89a00" stroke-width="1"/>
<polyline points="183,484 188,484" fill="none" stroke="#a89a00" stroke-width="1"/>
<polyline points="183,554 188,554" fill="none" stroke="#a89a00" stroke-width="1"/>
<polyline points="245,193 285,192 344,191.5 368,191.5 417,196.5 406,342 402,390 388,510 380,580 374,680 375,660 371,719 267,712.5 265,660 264,560 256,510 248,410 246.5,306 245,193" fill="none" stroke="#ff0000" stroke-width="1"/>
<polygon points="254,200 368,198.5 409,203 404,253 400,288 397,341 396,371 388,448 383,479 380,511 304,503 263,507 259,475 256,448 255,371 255,341 253,304 254,200" fill="#d3d3d3" stroke="none" stroke-width="1"/>
<polygon points="263,507 304,503 380,511 376,560 370,660 365.5,711 275.5,706 274,660 273,630 270,570" fill="#ff0000" stroke="none" stroke-width="1"/>
<polyline points="410,205 402,290 398,345 390,450 384,500 376,580 369,700" fill="none" stroke="#c8c860" stroke-width="0.8"/>
<polyline points="263,508 271,584 273,640" fill="none" stroke="#e0e040" stroke-width="1"/>
<polyline points="273,640 275,705" fill="none" stroke="#8a8a30" stroke-width="0.8"/>
<polyline points="254,242 404,253" fill="none" stroke="#000" stroke-width="1.6"/>
<polyline points="253,304.5 400,288" fill="none" stroke="#000" stroke-width="1.6"/>
<polyline points="255,334.5 309,334.5 397.5,342" fill="none" stroke="#000" stroke-width="1.6"/>
<polyline points="255,371.5 396,371.5" fill="none" stroke="#000" stroke-width="1.6"/>
<polyline points="256,448.5 325,441 388,448.5" fill="none" stroke="#000" stroke-width="1.6"/>
<polyline points="259,475 383,479" fill="none" stroke="#000" stroke-width="1.6"/>
<polyline points="263,507 304,503 380,511" fill="none" stroke="#000" stroke-width="1.6"/>
<polyline points="432,198.5 640,217 817,232 821,360 822,376" fill="none" stroke="#ff0000" stroke-width="1"/>
<polyline points="438.5,205 640,223 811.5,238.5 814.5,360 817,376" fill="none" stroke="#ffff00" stroke-width="1"/>
<polyline points="432,198.5 423,320 412,520" fill="none" stroke="#ff0000" stroke-width="1"/>
<polyline points="438.5,205 429,320 424.7,393.3" fill="none" stroke="#ffff00" stroke-width="1"/>
<polyline points="423.3,393.3 418.3,543.3" fill="none" stroke="#e0f0a0" stroke-width="1"/>
<polyline points="426,393.3 420.7,543.3" fill="none" stroke="#e0f0a0" stroke-width="1"/>
<polyline points="419.5,543.3 410.5,660.5" fill="none" stroke="#ffff00" stroke-width="1"/>
<polyline points="474,209 467,274" fill="none" stroke="#a89a00" stroke-width="1"/>
<polyline points="509.5,212 503,277" fill="none" stroke="#a89a00" stroke-width="1"/>
<polyline points="536,214.5 529.5,280" fill="none" stroke="#a89a00" stroke-width="1"/>
<polyline points="593.5,219.5 587,285" fill="none" stroke="#a89a00" stroke-width="1"/>
<polyline points="629.5,223 623,288" fill="none" stroke="#a89a00" stroke-width="1"/>
<polyline points="656,226 650,291" fill="none" stroke="#a89a00" stroke-width="1"/>
<polyline points="706.5,230 700,295" fill="none" stroke="#a89a00" stroke-width="1"/>
<polyline points="740,233.5 733,297" fill="none" stroke="#a89a00" stroke-width="1"/>
<polyline points="776.5,237 771,297.5" fill="none" stroke="#a89a00" stroke-width="1"/>
<polyline points="773.5,275 811.5,274" fill="none" stroke="#a89a00" stroke-width="1"/>
<polyline points="431,305 499,310.5" fill="none" stroke="#a89a00" stroke-width="1"/>
<polyline points="429,330 497,335.5" fill="none" stroke="#a89a00" stroke-width="1"/>
<polyline points="426.5,352 495.5,357" fill="none" stroke="#a89a00" stroke-width="1"/>
<polyline points="425.5,373 480,378" fill="none" stroke="#a89a00" stroke-width="1"/>
<polyline points="424.5,398 480,402" fill="none" stroke="#a89a00" stroke-width="1"/>
<polyline points="423,409 480,414.5" fill="none" stroke="#a89a00" stroke-width="1"/>
<polyline points="422,487 473,490.5" fill="none" stroke="#a89a00" stroke-width="1"/>
<polyline points="420,543 472,546.5" fill="none" stroke="#a89a00" stroke-width="1"/>
<polyline points="415.5,589 469,593" fill="none" stroke="#a89a00" stroke-width="1"/>
<polyline points="642.9,319.3 638.6,355.1 639,365.2 657.7,367.5" fill="none" stroke="#e0f0a0" stroke-width="1"/>
<polyline points="644.4,320.1 640.5,359.8" fill="none" stroke="#e0f0a0" stroke-width="1"/>
<polyline points="636.7,356.7 636.7,367.5 656.1,370.6 656.5,376" fill="none" stroke="#e0f0a0" stroke-width="1"/>
<polyline points="614.1,354.7 638.2,356.7" fill="none" stroke="#e0f0a0" stroke-width="1"/>
<polyline points="614.1,354.7 613.3,376" fill="none" stroke="#e0f0a0" stroke-width="1"/>
<polyline points="613.3,352 612.5,376" fill="none" stroke="#a89a00" stroke-width="1"/>
<polyline points="613.3,352.4 625.8,352.4 625.8,354.3 636.7,355.1" fill="none" stroke="#ffffff" stroke-width="1"/>
<polyline points="618.4,356.7 615.7,376" fill="none" stroke="#ff0000" stroke-width="1"/>
<path d="M624.5,364.5 L624.5,359 C624.5,357 626,356.5 629.5,356.5 C633,356.5 635.5,357 635.5,359 L635.5,361.5 C635.5,363 633,363.5 630,363.5 C628,363.5 627,363 627,361.5 L627,357" fill="none" stroke="#fff" stroke-width="1"/>
<polyline points="624.2,369.1 624.2,374.5 635.9,374.5 635.9,369.1" fill="none" stroke="#ffffff" stroke-width="1"/>
<polyline points="560,364.5 605,364.5 606,365.5 613,365.5" fill="none" stroke="#a89a00" stroke-width="1"/>
<path d="M453.58,218.50 L455.44,217.00 L454.88,225.00 M461.94,217.00 L458.44,217.00 L457.69,220.50 L460.69,220.50 L461.62,221.50 L461.44,224.00 L460.38,225.00 L458.38,225.00 L457.44,224.00" fill="none" stroke="#0000ff" stroke-width="1"/>
<path d="M486.58,219.50 L488.44,218.00 L487.88,226.00 M494.44,218.00 L492.44,218.00 L490.80,220.00 L490.44,225.00 L491.38,226.00 L493.38,226.00 L494.44,225.00 L494.62,222.50 L493.69,221.50 L490.69,221.50" fill="none" stroke="#0000ff" stroke-width="1"/>
<path d="M509.58,223.50 L511.44,222.00 L510.88,230.00 M513.93,222.00 L517.93,222.00 L514.88,230.00 M514.90,226.00 L517.15,226.00" fill="none" stroke="#0000ff" stroke-width="1"/>
<path d="M560.08,230.00 L561.93,228.50 L561.38,236.50 M565.43,228.50 L567.43,228.50 L568.37,229.50 L568.23,231.50 L567.15,232.50 L565.15,232.50 L564.23,231.50 L564.37,229.50 L565.43,228.50 M565.15,232.50 L564.09,233.50 L563.95,235.50 L564.88,236.50 L566.88,236.50 L567.95,235.50 L568.09,233.50 L567.15,232.50" fill="none" stroke="#0000ff" stroke-width="1"/>
<path d="M608.58,235.00 L610.43,233.50 L609.88,241.50 M616.69,237.00 L613.69,237.00 L612.76,236.00 L612.87,234.50 L613.93,233.50 L615.93,233.50 L616.87,234.50 L616.51,239.50 L614.88,241.50 L612.88,241.50" fill="none" stroke="#0000ff" stroke-width="1"/>
<path d="M636.33,237.00 L637.43,235.50 L639.43,235.50 L640.37,236.50 L640.23,238.50 L635.88,243.50 L639.88,243.50 M643.68,235.50 L645.68,235.50 L646.62,236.50 L646.20,242.50 L645.12,243.50 L643.12,243.50 L642.20,242.50 L642.62,236.50 L643.68,235.50" fill="none" stroke="#0000ff" stroke-width="1"/>
<path d="M667.08,239.00 L668.18,237.50 L670.18,237.50 L671.12,238.50 L670.98,240.50 L666.62,245.50 L670.62,245.50 M673.83,239.00 L675.68,237.50 L675.12,245.50" fill="none" stroke="#0000ff" stroke-width="1"/>
<path d="M712.33,243.50 L713.43,242.00 L715.43,242.00 L716.37,243.00 L716.23,245.00 L711.88,250.00 L715.88,250.00 M718.58,243.50 L719.68,242.00 L721.68,242.00 L722.62,243.00 L722.48,245.00 L718.12,250.00 L722.12,250.00" fill="none" stroke="#0000ff" stroke-width="1"/>
<path d="M749.33,241.50 L750.43,240.00 L752.43,240.00 L753.37,241.00 L753.23,243.00 L748.88,248.00 L752.88,248.00 M755.68,240.00 L759.68,240.00 L757.44,243.50 L758.44,243.50 L759.37,244.50 L759.20,247.00 L758.12,248.00 L756.12,248.00 L755.20,247.00" fill="none" stroke="#0000ff" stroke-width="1"/>
<path d="M788.08,247.50 L789.18,246.00 L791.18,246.00 L792.12,247.00 L791.98,249.00 L787.62,254.00 L791.62,254.00 M797.12,254.00 L797.68,246.00 L794.05,251.50 L798.55,251.50" fill="none" stroke="#0000ff" stroke-width="1"/>
<path d="M786.33,332.50 L787.43,331.00 L789.43,331.00 L790.37,332.00 L790.23,334.00 L785.88,339.00 L789.88,339.00 M796.68,331.00 L793.18,331.00 L792.44,334.50 L795.44,334.50 L796.37,335.50 L796.20,338.00 L795.12,339.00 L793.12,339.00 L792.20,338.00" fill="none" stroke="#0000ff" stroke-width="1"/>
<path d="M440.83,317.50 L442.69,316.00 L442.12,324.00 M447.88,324.00 L448.44,316.00 L444.80,321.50 L449.30,321.50" fill="none" stroke="#0000ff" stroke-width="1"/>
<path d="M436.58,337.50 L438.44,336.00 L437.88,344.00 M440.94,336.00 L444.94,336.00 L442.69,339.50 L443.69,339.50 L444.62,340.50 L444.44,343.00 L443.38,344.00 L441.38,344.00 L440.44,343.00" fill="none" stroke="#0000ff" stroke-width="1"/>
<path d="M436.58,363.00 L438.44,361.50 L437.88,369.50 M440.83,363.00 L441.94,361.50 L443.94,361.50 L444.87,362.50 L444.73,364.50 L440.38,369.50 L444.38,369.50" fill="none" stroke="#0000ff" stroke-width="1"/>
<path d="M437.33,384.00 L439.19,382.50 L438.62,390.50 M442.08,384.00 L443.94,382.50 L443.38,390.50" fill="none" stroke="#0000ff" stroke-width="1"/>
<path d="M438.58,402.00 L440.44,400.50 L439.88,408.50 M443.94,400.50 L445.94,400.50 L446.87,401.50 L446.44,407.50 L445.38,408.50 L443.38,408.50 L442.44,407.50 L442.87,401.50 L443.94,400.50" fill="none" stroke="#0000ff" stroke-width="1"/>
<path d="M444.31,448.00 L441.31,448.00 L440.38,447.00 L440.49,445.50 L441.56,444.50 L443.56,444.50 L444.49,445.50 L444.14,450.50 L442.50,452.50 L440.50,452.50" fill="none" stroke="#0000ff" stroke-width="1"/>
<path d="M440.56,509.00 L442.56,509.00 L443.49,510.00 L443.35,512.00 L442.28,513.00 L440.28,513.00 L439.35,512.00 L439.49,510.00 L440.56,509.00 M440.28,513.00 L439.21,514.00 L439.07,516.00 L440.00,517.00 L442.00,517.00 L443.07,516.00 L443.21,514.00 L442.28,513.00" fill="none" stroke="#0000ff" stroke-width="1"/>
<path d="M435.56,566.50 L439.56,566.50 L436.50,574.50 M436.53,570.50 L438.78,570.50" fill="none" stroke="#0000ff" stroke-width="1"/>
<path d="M616.18,339.50 L620.18,339.50 L617.94,343.00 L618.94,343.00 L619.87,344.00 L619.70,346.50 L618.62,347.50 L616.62,347.50 L615.70,346.50 M622.83,341.00 L624.68,339.50 L624.12,347.50" fill="none" stroke="#0000ff" stroke-width="1"/>
<path d="M673.43,359.00 L677.43,359.00 L675.19,362.50 L676.19,362.50 L677.12,363.50 L676.95,366.00 L675.88,367.00 L673.88,367.00 L672.95,366.00 M680.68,359.00 L682.68,359.00 L683.62,360.00 L683.20,366.00 L682.12,367.00 L680.12,367.00 L679.20,366.00 L679.62,360.00 L680.68,359.00" fill="none" stroke="#0000ff" stroke-width="1"/>
<path d="M575.18,516.50 L579.18,516.50 L576.94,520.00 L577.94,520.00 L578.87,521.00 L578.70,523.50 L577.62,524.50 L575.62,524.50 L574.70,523.50 M584.12,524.50 L584.68,516.50 L581.05,522.00 L585.55,522.00" fill="none" stroke="#0000ff" stroke-width="1"/>
<path d="M569.43,550.50 L573.43,550.50 L571.19,554.00 L572.19,554.00 L573.12,555.00 L572.95,557.50 L571.88,558.50 L569.88,558.50 L568.95,557.50 M579.68,550.50 L576.18,550.50 L575.44,554.00 L578.44,554.00 L579.37,555.00 L579.20,557.50 L578.12,558.50 L576.12,558.50 L575.20,557.50" fill="none" stroke="#0000ff" stroke-width="1"/>
<path d="M539.43,603.00 L543.43,603.00 L541.19,606.50 L542.19,606.50 L543.12,607.50 L542.95,610.00 L541.88,611.00 L539.88,611.00 L538.95,610.00 M549.18,603.00 L547.18,603.00 L545.54,605.00 L545.20,610.00 L546.12,611.00 L548.12,611.00 L549.20,610.00 L549.37,607.50 L548.44,606.50 L545.44,606.50" fill="none" stroke="#0000ff" stroke-width="1"/>
<polyline points="841,376 841,249 844,245 853,242 884,243.5" fill="none" stroke="#ff0000" stroke-width="1"/>
<polyline points="848.3,376 848.3,252 851,249 884,249" fill="none" stroke="#ffff00" stroke-width="1"/>
<polyline points="850,376 850,253.5 852,251.7 884,251.7" fill="none" stroke="#ffff00" stroke-width="1"/>
<path d="M868.58,368.50 L870.43,367.00 L869.88,375.00 M873.93,367.00 L875.93,367.00 L876.87,368.00 L876.45,374.00 L875.38,375.00 L873.38,375.00 L872.45,374.00 L872.87,368.00 L873.93,367.00" fill="none" stroke="#0000ff" stroke-width="1"/>
<path d="M826.58,158.00 L828.43,156.50 L827.88,164.50 M831.93,156.50 L833.93,156.50 L834.87,157.50 L834.45,163.50 L833.38,164.50 L831.38,164.50 L830.45,163.50 L830.87,157.50 L831.93,156.50" fill="none" stroke="#0000ff" stroke-width="1"/>
<path d="M859.32,161.00 L856.32,161.00 L855.38,160.00 L855.49,158.50 L856.56,157.50 L858.56,157.50 L859.49,158.50 L859.14,163.50 L857.50,165.50 L855.50,165.50" fill="none" stroke="#0000ff" stroke-width="1"/>
<path d="M877.56,158.50 L879.56,158.50 L880.49,159.50 L880.35,161.50 L879.28,162.50 L877.28,162.50 L876.35,161.50 L876.49,159.50 L877.56,158.50 M877.28,162.50 L876.21,163.50 L876.07,165.50 L877.00,166.50 L879.00,166.50 L880.07,165.50 L880.21,163.50 L879.28,162.50" fill="none" stroke="#0000ff" stroke-width="1"/>
<polyline points="406,640 399.5,737.5 541.7,736.9 554.9,654.4 559.5,645.1 560.3,629.5" fill="none" stroke="#ff0000" stroke-width="1"/>
<polyline points="601,513 596.5,534" fill="none" stroke="#ff0000" stroke-width="1"/>
<polyline points="412,520 406,640" fill="none" stroke="#ff0000" stroke-width="1"/>
<polyline points="410.5,660.5 406,731.5 516,731.5 517,732.5 538.5,732.5" fill="none" stroke="#ffff00" stroke-width="1"/>
<polyline points="538.5,732.5 552,658 560.3,628.8" fill="none" stroke="#a89a00" stroke-width="1"/>
<polyline points="560.3,628.8 575.5,589.5" fill="none" stroke="#e0f0a0" stroke-width="1"/>
<polyline points="575.5,589.5 595,555 596.5,545 598,513" fill="none" stroke="#ffff00" stroke-width="1"/>
<polyline points="410.5,661.5 434,662.5 435.5,732" fill="none" stroke="#a89a00" stroke-width="1"/>
<polyline points="458,668 457.5,732" fill="none" stroke="#a89a00" stroke-width="1"/>
<polyline points="497.5,667 497.5,732" fill="none" stroke="#a89a00" stroke-width="1"/>
<polyline points="517.5,653 517.5,732" fill="none" stroke="#a89a00" stroke-width="1"/>
<polyline points="550,532 596.5,534.5" fill="none" stroke="#a89a00" stroke-width="1"/>
<polyline points="531,574.5 580,580.5" fill="none" stroke="#a89a00" stroke-width="1"/>
<polyline points="524,629.5 560,629.5" fill="none" stroke="#a89a00" stroke-width="1"/>
<path d="M423.06,714.50 L419.56,714.50 L418.81,718.00 L421.81,718.00 L422.75,719.00 L422.57,721.50 L421.50,722.50 L419.50,722.50 L418.57,721.50" fill="none" stroke="#0000ff" stroke-width="1"/>
<path d="M445.00,725.50 L445.56,717.50 L441.93,723.00 L446.43,723.00" fill="none" stroke="#0000ff" stroke-width="1"/>
<path d="M471.06,717.50 L475.06,717.50 L472.81,721.00 L473.81,721.00 L474.75,722.00 L474.57,724.50 L473.50,725.50 L471.50,725.50 L470.57,724.50" fill="none" stroke="#0000ff" stroke-width="1"/>
<path d="M503.95,717.50 L505.06,716.00 L507.06,716.00 L507.99,717.00 L507.85,719.00 L503.50,724.00 L507.50,724.00" fill="none" stroke="#0000ff" stroke-width="1"/>
<path d="M528.21,717.00 L530.06,715.50 L529.50,723.50" fill="none" stroke="#0000ff" stroke-width="1"/>
<polyline points="637.5,514 563.5,656 550.5,737.5 567,737.5 567,738.5 833.5,735.5 822,513" fill="none" stroke="#ff0000" stroke-width="1"/>
<polyline points="641,514.5 567.3,657.5" fill="none" stroke="#e0f0a0" stroke-width="1"/>
<polyline points="567.3,657.5 554.9,732.2" fill="none" stroke="#a89a00" stroke-width="1"/>
<polyline points="554.9,732.5 769,732.5 827,729.5 816,513" fill="none" stroke="#ffff00" stroke-width="1"/>
<polyline points="641,514.5 660,514.5 753,516" fill="none" stroke="#ffff00" stroke-width="1"/>
<polyline points="753,516 790,513" fill="none" stroke="#a89a00" stroke-width="1"/>
<polyline points="753,516 757.5,569.5 818.5,566" fill="none" stroke="#a89a00" stroke-width="1"/>
<polyline points="727,596 733.5,733" fill="none" stroke="#a89a00" stroke-width="1"/>
<polyline points="593.5,607 620,609.5 615.5,732.5" fill="none" stroke="#a89a00" stroke-width="1"/>
<polyline points="581,629.5 590,630.5 585.5,732.5" fill="none" stroke="#a89a00" stroke-width="1"/>
<polyline points="621,513 617,519 634,519 636,513" fill="none" stroke="#ffffff" stroke-width="1"/>
<path d="M571.00,722.50 L571.56,714.50 L567.92,720.00 L572.42,720.00" fill="none" stroke="#0000ff" stroke-width="1"/>
<path d="M596.56,714.00 L600.56,714.00 L598.32,717.50 L599.32,717.50 L600.25,718.50 L600.07,721.00 L599.00,722.00 L597.00,722.00 L596.07,721.00" fill="none" stroke="#0000ff" stroke-width="1"/>
<path d="M674.96,718.00 L676.06,716.50 L678.06,716.50 L678.99,717.50 L678.85,719.50 L674.50,724.50 L678.50,724.50" fill="none" stroke="#0000ff" stroke-width="1"/>
<path d="M779.71,713.00 L781.56,711.50 L781.00,719.50" fill="none" stroke="#0000ff" stroke-width="1"/>
<path d="M787.06,534.50 L783.56,534.50 L782.82,538.00 L785.82,538.00 L786.75,539.00 L786.57,541.50 L785.50,542.50 L783.50,542.50 L782.57,541.50" fill="none" stroke="#0000ff" stroke-width="1"/>
<polyline points="843.5,376 848.5,513.5 847.5,560 849.5,737 884,737" fill="none" stroke="#ff0000" stroke-width="1"/>
<polyline points="852.5,376 855,513.5 857.5,731.5 884,731.5" fill="none" stroke="#ffff00" stroke-width="1"/>
<polyline points="858.5,530 858.5,621" fill="none" stroke="#e0f0a0" stroke-width="1"/>
<polyline points="857.5,594.5 884,594.5" fill="none" stroke="#a89a00" stroke-width="1"/>
<polyline points="857.5,621.5 884,621.5" fill="none" stroke="#a89a00" stroke-width="1"/>
<polyline points="857.5,687.5 884,687.5" fill="none" stroke="#a89a00" stroke-width="1"/>
<polyline points="884,479.5 873,479.5 871.5,480.5 873,482 884,482" fill="none" stroke="#e0f0a0" stroke-width="1"/>
<polyline points="872,488 884,486.5" fill="none" stroke="#ff0000" stroke-width="1"/>
<polyline points="872,505.5 884,504" fill="none" stroke="#ff0000" stroke-width="1"/>
<polyline points="872,511 884,511" fill="none" stroke="#ffff00" stroke-width="1"/>
<path d="M875.08,530.50 L876.93,529.00 L876.38,537.00 M882.93,529.00 L880.93,529.00 L879.29,531.00 L878.95,536.00 L879.88,537.00 L881.88,537.00 L882.95,536.00 L883.12,533.50 L882.19,532.50 L879.19,532.50" fill="none" stroke="#0000ff" stroke-width="1"/>
<path d="M865.58,604.00 L867.43,602.50 L866.88,610.50 M873.93,602.50 L870.43,602.50 L869.69,606.00 L872.69,606.00 L873.62,607.00 L873.45,609.50 L872.38,610.50 L870.38,610.50 L869.45,609.50" fill="none" stroke="#0000ff" stroke-width="1"/>
<path d="M866.33,657.50 L868.18,656.00 L867.62,664.00 M873.38,664.00 L873.93,656.00 L870.30,661.50 L874.80,661.50" fill="none" stroke="#0000ff" stroke-width="1"/>
<path d="M864.58,713.50 L866.43,712.00 L865.88,720.00 M868.93,712.00 L872.93,712.00 L870.69,715.50 L871.69,715.50 L872.62,716.50 L872.45,719.00 L871.38,720.00 L869.38,720.00 L868.45,719.00" fill="none" stroke="#0000ff" stroke-width="1"/>
<polyline points="403,779.5 640,775 790,768.5" fill="none" stroke="#ff0000" stroke-width="1"/>
<polyline points="822,771 884,766" fill="none" stroke="#ff0000" stroke-width="1"/>
<polyline points="606,784 640,783 790,778" fill="none" stroke="#ffff00" stroke-width="1"/>
<polyline points="822,777 884,774" fill="none" stroke="#ffff00" stroke-width="1"/>
<polyline points="822,777 824,784" fill="none" stroke="#ffff00" stroke-width="1"/>
<path d="M231,783.5 C238,778 245,776.5 252,776.5 L306,777 C312,778 318,780 323,783.5" fill="none" stroke="#ee80ee" stroke-width="1.2"/>
<path d="M759.80,219.70 L759.80,203.20 L767.02,203.20 L769.60,205.78 L769.60,209.90 L767.02,212.48 L759.80,212.48 M765.47,212.48 L770.11,219.70 M774.81,208.36 L774.81,217.64 L776.87,219.70 L780.99,219.70 L783.06,217.64 M783.06,208.36 L783.06,219.70 M788.78,208.36 L793.93,208.36 L795.99,210.42 L795.99,219.70 M795.99,213.00 L789.81,213.00 L787.74,215.06 L787.74,217.64 L789.81,219.70 L793.93,219.70 L795.99,217.64 M811.55,219.70 L811.55,203.20 L817.74,213.00 L823.92,203.20 L823.92,219.70 M828.63,208.36 L828.63,219.70 M828.63,203.20 L828.63,204.75 M841.53,208.36 L841.53,222.28 L839.47,224.34 L833.80,224.34 M841.53,210.42 L839.47,208.36 L835.35,208.36 L833.28,210.42 L833.28,217.64 L835.35,219.70 L839.47,219.70 L841.53,217.64 M846.22,208.36 L846.22,217.64 L848.28,219.70 L852.41,219.70 L854.47,217.64 M854.47,208.36 L854.47,219.70 M859.16,214.03 L867.41,214.03 L867.41,210.42 L865.35,208.36 L861.22,208.36 L859.16,210.42 L859.16,217.64 L861.22,219.70 L866.89,219.70 M872.10,203.20 L872.10,218.15 L873.64,219.70 L875.19,219.70" fill="none" stroke="#ffffff" stroke-width="1"/>
<path d="M243.00,610.40 L226.20,604.62 L243.00,598.85 M237.22,608.30 L237.22,600.95 M231.45,594.13 L243.00,589.93 L231.45,585.73 M241.95,581.01 L243.00,581.01 M228.30,554.76 L226.20,556.86 L226.20,562.11 L228.30,564.21 L232.50,564.21 L234.60,562.11 L234.60,556.86 L236.70,554.76 L240.90,554.76 L243.00,556.86 L243.00,562.11 L240.90,564.21 M237.22,550.04 L237.22,541.64 L233.55,541.64 L231.45,543.74 L231.45,547.94 L233.55,550.04 L240.90,550.04 L243.00,547.94 L243.00,542.17 M227.77,534.82 L240.90,534.82 L243.00,532.72 L243.00,530.62 M231.45,536.92 L231.45,530.62 M237.22,525.90 L237.22,517.50 L233.55,517.50 L231.45,519.60 L231.45,523.80 L233.55,525.90 L240.90,525.90 L243.00,523.80 L243.00,518.03 M226.20,493.36 L243.00,493.36 M233.55,493.36 L231.45,495.46 L231.45,499.66 L233.55,501.76 L240.90,501.76 L243.00,499.66 L243.00,495.46 L240.90,493.36 M237.22,488.64 L237.22,480.24 L233.55,480.24 L231.45,482.34 L231.45,486.54 L233.55,488.64 L240.90,488.64 L243.00,486.54 L243.00,480.76 M228.30,455.04 L226.20,457.14 L226.20,462.39 L228.30,464.49 L232.50,464.49 L234.60,462.39 L234.60,457.14 L236.70,455.04 L240.90,455.04 L243.00,457.14 L243.00,462.39 L240.90,464.49 M237.22,450.32 L237.22,441.92 L233.55,441.92 L231.45,444.02 L231.45,448.22 L233.55,450.32 L240.90,450.32 L243.00,448.22 L243.00,442.45 M227.77,435.10 L240.90,435.10 L243.00,433.00 L243.00,430.90 M231.45,437.20 L231.45,430.90 M237.22,426.18 L237.22,417.78 L233.55,417.78 L231.45,419.88 L231.45,424.08 L233.55,426.18 L240.90,426.18 L243.00,424.08 L243.00,418.31 M231.45,413.06 L243.00,413.06 M233.55,413.06 L231.45,410.96 L231.45,408.86 L233.55,406.76 L243.00,406.76 M233.55,406.76 L231.45,404.66 L231.45,402.56 L233.55,400.46 L243.00,400.46 M226.20,395.74 L243.00,395.74 M233.55,395.74 L231.45,393.64 L231.45,389.44 L233.55,387.34 L240.90,387.34 L243.00,389.44 L243.00,393.64 L240.90,395.74 M231.45,382.62 L243.00,382.62 M234.60,382.62 L231.45,379.47 L231.45,376.32 M231.45,369.50 L231.45,365.30 L233.55,363.20 L240.90,363.20 L243.00,365.30 L243.00,369.50 L240.90,371.60 L233.55,371.60 L231.45,369.50" fill="none" stroke="#ffffff" stroke-width="1"/>
<path d="M386.00,655.00 L403.30,655.00 L403.30,647.43 L400.60,644.73 L397.35,644.73 L394.65,647.43 L394.65,655.00 M386.00,655.00 L386.00,647.97 L388.70,645.27 L391.95,645.27 L394.65,647.97 M397.35,640.40 L397.35,631.75 L393.57,631.75 L391.41,633.91 L391.41,638.24 L393.57,640.40 L401.14,640.40 L403.30,638.24 L403.30,632.29 M393.57,618.71 L391.41,620.87 L391.41,625.20 L393.57,627.36 L401.14,627.36 L403.30,625.20 L403.30,620.87 L401.14,618.71 M391.41,612.16 L391.41,607.83 L393.57,605.67 L401.14,605.67 L403.30,607.83 L403.30,612.16 L401.14,614.32 L393.57,614.32 L391.41,612.16 M386.00,570.73 L403.30,570.73 M393.57,570.73 L391.41,572.89 L391.41,577.22 L393.57,579.38 L401.14,579.38 L403.30,577.22 L403.30,572.89 L401.14,570.73 M391.41,564.18 L391.41,559.85 L393.57,557.69 L401.14,557.69 L403.30,559.85 L403.30,564.18 L401.14,566.34 L393.57,566.34 L391.41,564.18 M403.30,531.40 L386.00,525.45 L403.30,519.51 M397.35,529.24 L397.35,521.67 M393.57,506.58 L391.41,508.75 L391.41,513.07 L393.57,515.23 L401.14,515.23 L403.30,513.07 L403.30,508.75 L401.14,506.58 M391.41,500.03 L391.41,495.71 L393.57,493.55 L401.14,493.55 L403.30,495.71 L403.30,500.03 L401.14,502.20 L393.57,502.20 L391.41,500.03 M391.41,489.16 L401.14,489.16 L403.30,487.00 L403.30,482.67 L401.14,480.51 M391.41,480.51 L403.30,480.51 M391.41,467.47 L406.00,467.47 L408.17,469.63 L408.17,475.58 M393.57,467.47 L391.41,469.63 L391.41,473.96 L393.57,476.12 L401.14,476.12 L403.30,473.96 L403.30,469.63 L401.14,467.47 M391.41,463.08 L401.14,463.08 L403.30,460.92 L403.30,456.59 L401.14,454.43 M391.41,454.43 L403.30,454.43 M397.35,450.04 L397.35,441.39 L393.57,441.39 L391.41,443.56 L391.41,447.88 L393.57,450.04 L401.14,450.04 L403.30,447.88 L403.30,441.93" fill="none" stroke="#ffffff" stroke-width="1"/>
<path d="M846.50,560.60 L829.70,560.60 L829.70,553.25 L832.33,550.62 L836.53,550.62 L839.15,553.25 L839.15,560.60 M839.15,554.83 L846.50,550.10 M834.95,545.52 L844.40,545.52 L846.50,543.42 L846.50,539.22 L844.40,537.12 M834.95,537.12 L846.50,537.12 M834.95,531.47 L834.95,526.22 L837.05,524.12 L846.50,524.12 M839.68,524.12 L839.68,530.42 L841.78,532.52 L844.40,532.52 L846.50,530.42 L846.50,526.22 L844.40,524.12" fill="none" stroke="#ffffff" stroke-width="1"/>
<path d="M513.88,313.00 L519.50,313.00 L521.38,314.88 L521.38,326.12 L519.50,328.00 L513.88,328.00 L512.00,326.12 L512.00,314.88 L513.88,313.00 M517.62,324.25 L521.38,328.47 M525.94,313.00 L525.94,326.12 L527.82,328.00 L533.44,328.00 L535.32,326.12 L535.32,313.00 M539.88,328.00 L545.04,313.00 L550.20,328.00 M541.76,322.84 L548.32,322.84 M554.79,313.00 L554.79,328.00 L560.41,328.00 L564.16,324.25 L564.16,316.75 L560.41,313.00 L554.79,313.00 M568.73,328.00 L568.73,313.00 L575.29,313.00 L577.64,315.34 L577.64,319.09 L575.29,321.44 L568.73,321.44 M573.89,321.44 L578.11,328.00 M582.67,328.00 L587.83,313.00 L592.99,328.00 M584.55,322.84 L591.11,322.84 M607.67,313.00 L607.67,328.00 M612.00,313.00 L612.00,328.00" fill="none" stroke="#0000ff" stroke-width="1"/>
<path d="M630.88,561.00 L636.50,561.00 L638.38,562.88 L638.38,574.12 L636.50,576.00 L630.88,576.00 L629.00,574.12 L629.00,562.88 L630.88,561.00 M634.62,572.25 L638.38,576.47 M643.21,561.00 L643.21,574.12 L645.08,576.00 L650.71,576.00 L652.58,574.12 L652.58,561.00 M657.41,576.00 L662.57,561.00 L667.72,576.00 M659.29,570.84 L665.85,570.84 M672.60,561.00 L672.60,576.00 L678.22,576.00 L681.97,572.25 L681.97,564.75 L678.22,561.00 L672.60,561.00 M686.80,576.00 L686.80,561.00 L693.37,561.00 L695.71,563.34 L695.71,567.09 L693.37,569.44 L686.80,569.44 M691.96,569.44 L696.18,576.00 M701.01,576.00 L706.17,561.00 L711.32,576.00 M702.88,570.84 L709.45,570.84 M726.48,561.00 L726.48,576.00 M730.89,561.00 L730.89,576.00 M735.30,561.00 L735.30,576.00" fill="none" stroke="#0000ff" stroke-width="1"/></svg></div>
<!-- status bar -->
<div class="abs" style="left:183px;top:784px;width:985px;height:24px;border:1px solid #9c9c9c;border-radius:0 0 2px 2px;background:#f5f5f5;border-left-color:#a8a8a8"></div>
<div class="abs" style="left:191px;top:788px;white-space:pre;letter-spacing:0.3px">Done</div>

<!-- DIALOG -->
<div class="abs" style="left:480px;top:376px;width:391px;height:137px;background:#f5f5f5;border:1px solid #8c8c8c;border-top-color:#c0c0c0;border-left-color:#c8c8c8"></div>
<div class="abs" style="left:481px;top:377px;width:389px;height:21px;background:linear-gradient(#ffffff 0,#fbfbfb 30%,#ececec 80%,#e2e2e2 100%)"></div>
<div class="abs" style="left:481px;top:398px;width:389px;height:1px;background:#a0a0a0"></div>
<div class="abs" style="left:485px;top:383px;width:19px;height:10px;border:1px solid #a8a8a8;border-radius:5px;background:linear-gradient(#fdfdfd 0,#f6f6f6 50%,#e2e2e2 51%,#e8e8e8 100%)"></div>
<div class="abs" style="left:584px;top:380px;white-space:pre;font-weight:bold;font-size:13.5px;color:#000;letter-spacing:0.8px">[JavaScript Application]</div>
<svg class="abs" style="left:844px;top:379px" width="20" height="18">
  <circle cx="10" cy="8.8" r="6.6" fill="url(#bg1)" stroke="#a8a8a8" stroke-width="1"/>
  <path d="M3.8,7.5 C5,10 15,10 16.2,7.5" fill="none" stroke="#b8b8b8" stroke-width="0.8"/>
</svg>
<svg class="abs" style="left:495px;top:411px" width="32" height="29">
  <defs><linearGradient id="gW" x1="0" y1="0" x2="1" y2="1"><stop offset="0" stop-color="#fff7b0"/><stop offset="0.6" stop-color="#f5e060"/><stop offset="1" stop-color="#e8c820"/></linearGradient></defs>
  <path d="M16,2.5 C16.8,2.5 17.3,3 17.8,3.8 L29.5,23.5 C30.2,25 29.6,26.5 27.8,26.5 L4.2,26.5 C2.4,26.5 1.8,25 2.5,23.5 L14.2,3.8 C14.7,3 15.2,2.5 16,2.5 Z" fill="url(#gW)" stroke="#b08800" stroke-width="1.2"/>
  <path d="M14.6,9 L17.4,9 L16.6,20 L15.4,20 Z" fill="#333"/>
  <ellipse cx="16" cy="22.5" rx="1.6" ry="1.2" fill="#333"/>
</svg>
<div class="abs" style="left:537px;top:414px;white-space:pre;letter-spacing:0.4px">Teste ID: Q1_C1</div>
<div class="abs" style="left:770px;top:473px;width:84px;height:27px;border:1px solid #8c8c8c;border-radius:3px;background:linear-gradient(#f8f8f8,#efefef)"></div>
<div class="abs" style="left:773px;top:476px;width:78px;height:21px;border:1px dotted #000"></div>
<div class="abs" style="left:804px;top:479px;white-space:pre;letter-spacing:0.5px">OK</div>

</body></html>
